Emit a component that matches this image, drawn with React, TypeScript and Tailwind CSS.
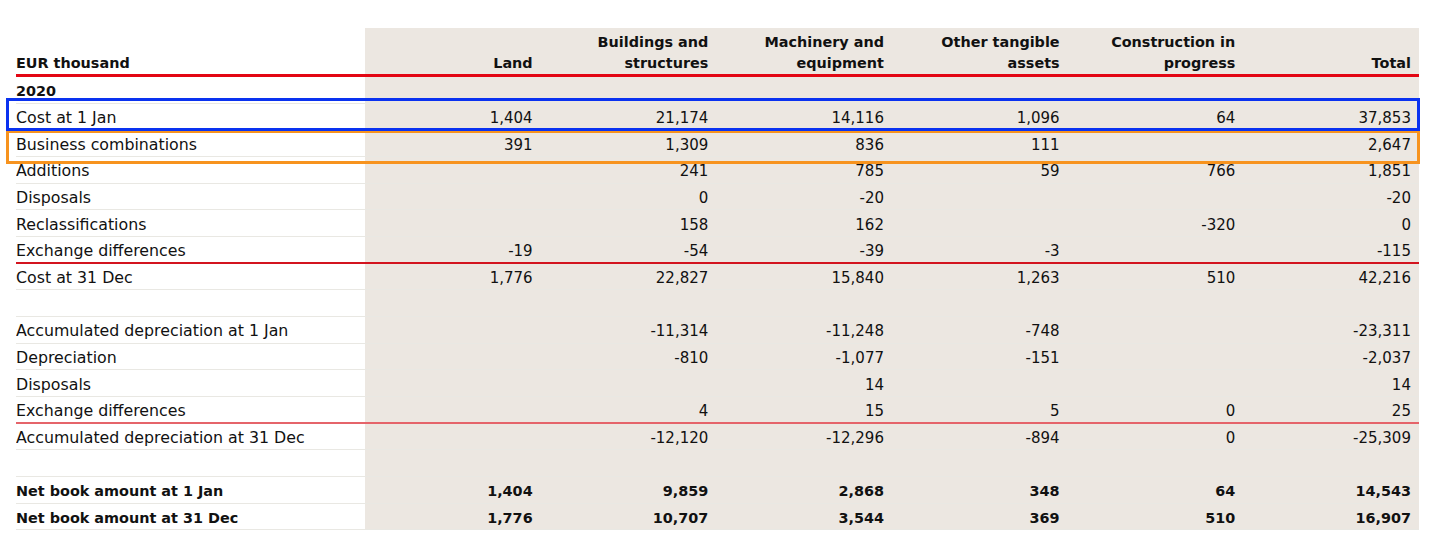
import React from 'react'

type Row = {
    label: string
    values?: string[]
    bold?: boolean
    line?: 'red' | 'pink'
}

const headers = [
    ['', 'Land'],
    ['Buildings and', 'structures'],
    ['Machinery and', 'equipment'],
    ['Other tangible', 'assets'],
    ['Construction in', 'progress'],
    ['', 'Total'],
]

const rows: Row[] = [
    { label: '2020', bold: true },
    { label: 'Cost at 1 Jan', values: ['1,404', '21,174', '14,116', '1,096', '64', '37,853'] },
    { label: 'Business combinations', values: ['391', '1,309', '836', '111', '', '2,647'] },
    { label: 'Additions', values: ['', '241', '785', '59', '766', '1,851'] },
    { label: 'Disposals', values: ['', '0', '-20', '', '', '-20'] },
    { label: 'Reclassifications', values: ['', '158', '162', '', '-320', '0'] },
    { label: 'Exchange differences', values: ['-19', '-54', '-39', '-3', '', '-115'], line: 'red' },
    { label: 'Cost at 31 Dec', values: ['1,776', '22,827', '15,840', '1,263', '510', '42,216'] },
    { label: '' },
    { label: 'Accumulated depreciation at 1 Jan', values: ['', '-11,314', '-11,248', '-748', '', '-23,311'] },
    { label: 'Depreciation', values: ['', '-810', '-1,077', '-151', '', '-2,037'] },
    { label: 'Disposals', values: ['', '', '14', '', '', '14'] },
    { label: 'Exchange differences', values: ['', '4', '15', '5', '0', '25'], line: 'pink' },
    { label: 'Accumulated depreciation at 31 Dec', values: ['', '-12,120', '-12,296', '-894', '0', '-25,309'] },
    { label: '' },
    { label: 'Net book amount at 1 Jan', values: ['1,404', '9,859', '2,868', '348', '64', '14,543'], bold: true },
    { label: 'Net book amount at 31 Dec', values: ['1,776', '10,707', '3,544', '369', '510', '16,907'], bold: true },
]

const lineColor = {
    red: 'border-b-2 border-[#d3141f]',
    pink: 'border-b-2 border-[#e5646a]',
    none: 'border-b border-[#e9e8e3]',
}

const grid = 'grid w-[1403px] grid-cols-[349px_repeat(6,175.67px)]'

export default function App() {
    return (
        <div
            className="relative w-[1456px] h-[548px] bg-white pt-[28px] px-4 text-[#111111]"
            style={{ fontFamily: '"DejaVu Sans", Verdana, sans-serif' }}
        >
            <div className={`${grid} h-[49px] border-b-[3px] border-[#e30613] font-bold text-[14.4px] leading-[21px]`}>
                <div className="flex items-end">EUR thousand</div>
                {headers.map((h, i) => (
                    <div
                        key={i}
                        className="bg-[#ece7e1] flex flex-col justify-end items-end pr-2"
                    >
                        {h[0] ? <span>{h[0]}</span> : null}
                        <span>{h[1]}</span>
                    </div>
                ))}
            </div>

            {rows.map((row, r) => (
                <div
                    key={r}
                    className={`${grid} h-[26.67px] ${lineColor[row.line ?? 'none']} leading-[18px] ${row.bold ? 'font-bold text-[14.4px]' : 'text-[15.8px]'}`}
                >
                    <div className="flex items-center pt-[3px] overflow-hidden">{row.label}</div>
                    {Array.from({ length: 6 }).map((_, i) => (
                        <div
                            key={i}
                            className={`bg-[#ece7e1] flex items-center justify-end pr-2 pt-[3px] overflow-hidden ${row.bold ? '' : 'text-[15px]'}`}
                        >
                            {row.values ? row.values[i] : ''}
                        </div>
                    ))}
                </div>
            ))}

            {/* highlight boxes */}
            <div className="absolute left-[6px] top-[130px] w-[1414px] h-[34px] border-[3px] border-[#f7931e]" />
            <div className="absolute left-[6px] top-[98px] w-[1414px] h-[33px] border-[3px] border-[#0a32f0]" />
        </div>
    )
}
